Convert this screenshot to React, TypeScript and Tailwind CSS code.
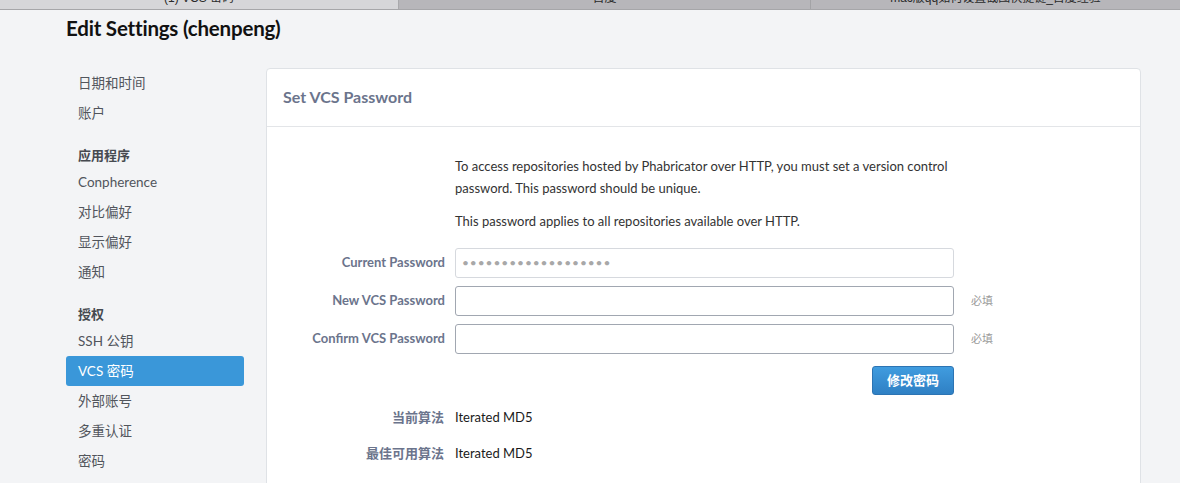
import React from "react";

const FONT = "font-['Lato','Noto_Sans_CJK_SC',sans-serif]";

function Tab({ label, className }: { label: string; className: string }) {
  return (
    <div className={`h-[9px] overflow-hidden flex justify-center ${className}`}>
      <span className="block -mt-[9px] text-[12px] leading-[14px] text-[#2a2a2a] font-['Helvetica','Noto_Sans_CJK_SC',sans-serif]">
        {label}
      </span>
    </div>
  );
}

function NavItem({ label, active }: { label: string; active?: boolean }) {
  return (
    <div
      className={`h-[30px] flex items-center px-[12px] text-[13.5px] rounded-[3px] ${
        active ? "bg-[#3a97d9] text-white" : "text-[#51555c]"
      }`}
    >
      {label}
    </div>
  );
}

function NavHeading({ label }: { label: string }) {
  return (
    <div className="pt-[17px] pb-[2px] px-[12px] text-[13px] leading-[20px] font-bold text-[#464a50]">
      {label}
    </div>
  );
}

function Row({
  label,
  children,
  note,
}: {
  label: string;
  children?: React.ReactNode;
  note?: string;
}) {
  return (
    <div className="flex items-center">
      <div className="w-[188px] text-right pr-[10px] text-[13px] font-bold text-[#6b748c]">
        {label}
      </div>
      <div className="w-[499px]">{children}</div>
      {note && (
        <div className="ml-[17px] text-[11px] text-[#9a9a9a]">{note}</div>
      )}
    </div>
  );
}

export default function App() {
  return (
    <div className={`w-[1180px] h-[483px] overflow-hidden bg-[#f3f4f6] ${FONT}`}>
      <div className="flex border-b border-[#a6a6a9]">
        <Tab label="(1) VCS 密码" className="w-[399px] bg-[#d6d6d9] border-r border-[#a9a9ac]" />
        <Tab label="百度" className="w-[412px] bg-[#b7b6ba] border-r border-[#a3a3a6]" />
        <Tab label="mac版qq如何设置截图快捷键_百度经验" className="flex-1 bg-[#b7b6ba]" />
      </div>
      <div className="ml-[66px] w-[1075px]">
        <div className="h-[58px] flex items-start pt-[4px]">
          <h1 className="text-[20.5px] font-bold text-[#111] leading-[28px] tracking-[-0.2px]">
            Edit Settings (chenpeng)
          </h1>
        </div>
        <div className="flex gap-[22px] items-start">
          <div className="w-[178px] flex flex-col">
            <NavItem label="日期和时间" />
            <NavItem label="账户" />
            <NavHeading label="应用程序" />
            <NavItem label="Conpherence" />
            <NavItem label="对比偏好" />
            <NavItem label="显示偏好" />
            <NavItem label="通知" />
            <NavHeading label="授权" />
            <NavItem label="SSH 公钥" />
            <NavItem label="VCS 密码" active />
            <NavItem label="外部账号" />
            <NavItem label="多重认证" />
            <NavItem label="密码" />
          </div>
          <div className="flex-1 bg-white border border-[#dfe2e6] rounded-[4px] h-[440px]">
            <div className="h-[58px] border-b border-[#e3e5e8] flex items-center px-[16px]">
              <div className="text-[16px] font-bold text-[#6b748c] -mt-[2px]">Set VCS Password</div>
            </div>
            <div className="pt-[28px]">
              <div className="ml-[188px] w-[510px] text-[13px] leading-[22px] text-[#333]">
                <p>
                  To access repositories hosted by Phabricator over HTTP, you must set a version control
                  password. This password should be unique.
                </p>
                <p className="mt-[11px]">This password applies to all repositories available over HTTP.</p>
              </div>
              <div className="mt-[16px] flex flex-col gap-[8px]">
                <Row label="Current Password">
                  <div className="h-[30px] border border-[#d6d9de] rounded-[3px] flex items-center px-[6px] text-[12px] tracking-[0.9px] text-[#a8a8a8]">
                    •••••••••••••••••••
                  </div>
                </Row>
                <Row label="New VCS Password" note="必填">
                  <div className="h-[30px] border border-[#a1a7b1] rounded-[3px]" />
                </Row>
                <Row label="Confirm VCS Password" note="必填">
                  <div className="h-[30px] border border-[#a1a7b1] rounded-[3px]" />
                </Row>
              </div>
              <div className="mt-[12px] ml-[605px] w-[82px]">
                <div className="h-[29px] rounded-[3px] border border-[#2c74b3] bg-gradient-to-b from-[#409cdf] to-[#2f80c4] flex items-center justify-center text-white text-[13px] font-bold">
                  修改密码
                </div>
              </div>
              <div className="mt-[12px] flex flex-col gap-[14px]">
                <div className="flex items-center h-[22px]">
                  <div className="w-[188px] text-right pr-[11px] text-[13px] font-bold text-[#6b748c]">当前算法</div>
                  <div className="text-[13px] text-[#1a1a1a]">Iterated MD5</div>
                </div>
                <div className="flex items-center h-[22px]">
                  <div className="w-[188px] text-right pr-[11px] text-[13px] font-bold text-[#6b748c]">最佳可用算法</div>
                  <div className="text-[13px] text-[#1a1a1a]">Iterated MD5</div>
                </div>
              </div>
            </div>
          </div>
        </div>
      </div>
    </div>
  );
}
